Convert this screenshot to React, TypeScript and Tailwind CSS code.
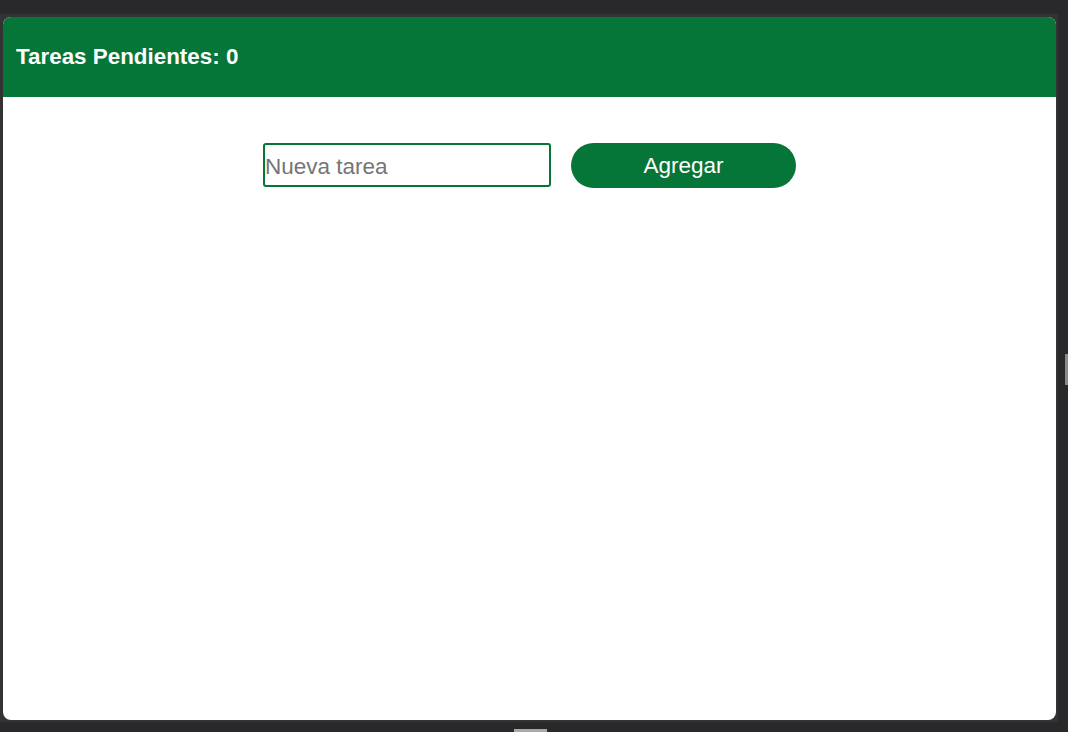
import React from "react";

export default function App() {
  return (
    <div
      className="w-[1068px] h-[732px] bg-[#29292b] flex flex-col overflow-hidden"
      style={{ fontFamily: '"Liberation Sans", Arial, sans-serif' }}
    >
      <div className="h-[14px] shrink-0 bg-[#29292b]" />
      <div className="flex h-[708px] shrink-0">
        <div className="w-[1058px] bg-[#333333] pt-[3px] pl-[3px] pr-[2px] pb-[2px] flex">
          <div className="flex-1 bg-white rounded-[8px] overflow-hidden flex flex-col">
            <div className="h-[80px] bg-[#067538] flex items-center px-[13px]">
              <h1 className="text-white text-[22.4px] font-bold leading-none">
                Tareas Pendientes: 0
              </h1>
            </div>
            <div className="flex justify-center gap-[20px] pt-[46px]">
              <input
                type="text"
                placeholder="Nueva tarea"
                className="w-[288px] h-[44px] border-2 border-[#067538] rounded-[3px] px-0 pt-[4px] pb-0 text-[22.5px] text-black placeholder:text-[#757575] outline-none"
                style={{ fontFamily: '"Liberation Sans", Arial, sans-serif' }}
              />
              <button className="w-[225px] h-[45px] bg-[#067538] rounded-full text-white text-[22.5px]">
                Agregar
              </button>
            </div>
          </div>
        </div>
        <div className="flex-1 flex items-start">
          <div className="w-[7px]" />
          <div className="mt-[340px] w-[3px] h-[31px] bg-[#8a8a8a]" />
        </div>
      </div>
      <div className="flex-1 flex items-end">
        <div className="ml-[514px] w-[33px] h-[3px] bg-[#a8a8a8]" />
      </div>
    </div>
  );
}
